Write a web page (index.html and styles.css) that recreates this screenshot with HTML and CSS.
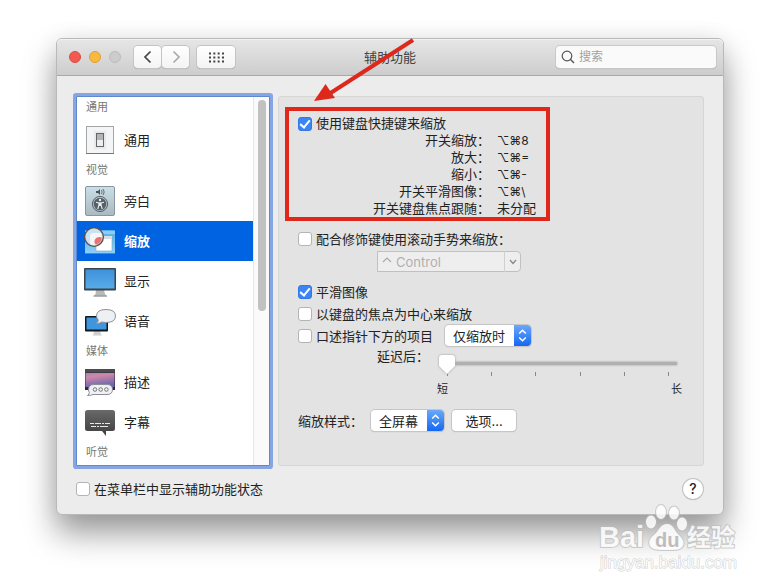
FILE: index.html
```html
<!DOCTYPE html>
<html lang="zh-CN">
<head>
<meta charset="utf-8">
<meta name="viewport" content="width=device-width, initial-scale=1">
<title>辅助功能</title>
<link rel="stylesheet" href="styles.css">
</head>
<body>
<main class="window">
  <header class="titlebar">
    <div class="titlebar-left">
      <div class="lights">
        <button class="light light-close" aria-label="关闭"></button>
        <button class="light light-min" aria-label="最小化"></button>
        <button class="light light-off" aria-label="缩放窗口" disabled></button>
      </div>
      <div class="history">
        <button class="tool" aria-label="后退"><svg width="10" height="14" viewBox="0 0 10 14"><path d="M7.500 1.500 2 7l5.500 5.500" fill="none" stroke="#444" stroke-width="1.700"/></svg></button>
        <button class="tool" aria-label="前进"><svg width="10" height="14" viewBox="0 0 10 14"><path d="M2.500 1.500 8 7l-5.500 5.500" fill="none" stroke="#aaa" stroke-width="1.700"/></svg></button>
      </div>
      <button class="tool tool-grid" aria-label="显示全部"><svg width="15" height="11" viewBox="0 0 15 11"><path d="M0 1.500h15M0 5.500h15M0 9.500h15" fill="none" stroke="#444" stroke-width="2" stroke-dasharray="2 2.330"/></svg></button>
    </div>
    <h1 class="title">辅助功能</h1>
    <label class="search">
      <svg width="14" height="14" viewBox="0 0 14 14"><circle cx="6" cy="6" r="4.800" fill="none" stroke="#555" stroke-width="1.200"/><path d="m9.500 9.500 3.500 3.500" stroke="#555" stroke-width="1.400"/></svg>
      <input type="search" placeholder="搜索" aria-label="搜索">
    </label>
  </header>

  <div class="content">
    <nav class="sidebar" aria-label="辅助功能类别">
      <div class="list">
        <h2 class="group group-first">通用</h2>
        <button class="item">
          <svg class="icon" viewBox="0 0 32 32"><rect x="2.500" y="2.500" width="27" height="27" fill="#f4f5f6" stroke="#a5a5a5"/><path d="M2 29.500h28" stroke="#777"/><rect x="10" y="7" width="12" height="18" rx="1" fill="#e9e9e9"/><rect x="12.500" y="9.500" width="7" height="13" fill="#eee" stroke="#666"/><path d="M13 10h6v6h-6z" fill="#b5b5b5"/></svg>
          通用
        </button>
        <h2 class="group">视觉</h2>
        <button class="item">
          <svg class="icon" viewBox="0 0 32 32"><defs><linearGradient id="vo" x2="0" y2="1"><stop stop-color="#cbdfe8"/><stop offset="1" stop-color="#a9b9bf"/></linearGradient></defs><rect x="1.500" y="1.500" width="29" height="29" rx="1.500" fill="url(#vo)" stroke="#88979e"/><path d="M12 6h2l2-2v6l-2-2h-2z" fill="#4a555a"/><path d="M17.500 5q1.300 2 0 4M19.200 4q2 3 0 6" fill="none" stroke="#4a555a" stroke-width=".8"/><circle cx="16" cy="19" r="7.600" fill="none" stroke="#566066"/><circle cx="16" cy="19" r="6.300" fill="#566066"/><circle cx="16" cy="15" r="1.200" fill="#e6eef2"/><path d="M12 17.300 15 18v2l-1.300 4M20 17.300 17 18v2l1.300 4" fill="none" stroke="#e6eef2" stroke-width="1.100"/><path d="M14.800 17.500h2.400v3.500h-2.400z" fill="#e6eef2"/></svg>
          旁白
        </button>
        <button class="item item-selected" aria-current="page">
          <svg class="icon" viewBox="0 0 32 32"><defs><linearGradient id="zw" x2="0" y2="1"><stop stop-color="#51aee9"/><stop offset="1" stop-color="#8ed1f7"/></linearGradient></defs><rect x="1" y="5" width="30" height="24" rx="1" fill="url(#zw)"/><path d="M1 6h30v3H1z" fill="#8dccf3"/><path d="M1 28.500h30" stroke="#3d91cf"/><rect x="12" y="11" width="16" height="15" rx="1" fill="#fff" stroke="#78a8c8" stroke-width=".6"/><path d="M12 11h16v3H12z" fill="#d9dde2"/><circle cx="10" cy="12" r="9" fill="#c9e2f4"/><path d="M6 11q0-3 3-3h8l2 4q0 9-9 9-4-1-4-4z" fill="#f6f6f6"/><path d="M10.500 17.500a5 5 0 0 1 8-4.500q0 5-5.500 7.500-2-1-2.500-3z" fill="#e77373"/><circle cx="10" cy="12" r="9.300" fill="none" stroke="#5c4f4c" stroke-width="1.500"/><circle cx="10" cy="12" r="8.200" fill="none" stroke="#d6e3ec" stroke-width=".6"/></svg>
          缩放
        </button>
        <button class="item">
          <svg class="icon" viewBox="0 0 32 32"><defs><linearGradient id="scr" x2="0" y2="1"><stop stop-color="#3f92da"/><stop offset="1" stop-color="#58aae8"/></linearGradient></defs><path d="M12 25h8l1 4 2 2.500H9.500L11.500 29z" fill="#b8b8b8"/><path d="M9.500 31h13.500" stroke="#8f8f8f"/><rect x="0" y="3" width="32" height="22.500" rx="1" fill="#38434c"/><rect x="1.500" y="4.500" width="29" height="19" fill="url(#scr)"/></svg>
          显示
        </button>
        <button class="item">
          <svg class="icon" viewBox="0 0 32 32"><path d="M10 26h6l1 3 1 1.500H8.500L9.500 29z" fill="#d0d0d0"/><rect x="1" y="11" width="23" height="15.500" rx="1" fill="#111820"/><rect x="2.500" y="12.500" width="20" height="12" fill="#3f96dd"/><path d="M12 18.500q2.500-1.500 2.300-3.500Q12.500 13 12.500 11q0-6.500 9.500-6.500t9.500 6.500-9.500 6.500q-2 0-4-.6-2.500 1.600-6 1.600z" fill="#eef0f3" stroke="#8f9397"/></svg>
          语音
        </button>
        <h2 class="group">媒体</h2>
        <button class="item">
          <svg class="icon" viewBox="0 0 32 32"><defs><linearGradient id="ph" x2="0.300" y2="1"><stop stop-color="#a684b8"/><stop offset=".3" stop-color="#cf87a8"/><stop offset="1" stop-color="#6d67b0"/></linearGradient></defs><rect x="1" y="3" width="30" height="21" fill="#2c2a33"/><path d="M1.500 7h29v14h-29z" fill="url(#ph)"/><path d="M1 3h30v3.500H1z" fill="#4c4c50"/><path d="M3.500 29.500q2-1.500 1.800-3Q4.500 25 4.500 24q0-5.500 5.500-5.500h13q5.500 0 5.500 5t-5.500 5H9q-2 1-5.500 1z" fill="#f0f1f5" stroke="#8b8d94"/><g fill="none" stroke="#777" stroke-width="1"><circle cx="11" cy="23.500" r="1.800"/><circle cx="16.700" cy="23.500" r="1.800"/><circle cx="22.400" cy="23.500" r="1.800"/></g></svg>
          描述
        </button>
        <button class="item">
          <svg class="icon" viewBox="0 0 32 32"><defs><linearGradient id="cap" x2="0" y2="1"><stop stop-color="#696969"/><stop offset="1" stop-color="#3e3e3e"/></linearGradient></defs><path d="M3.500 4h25Q31 4 31 6.500v16q0 2.500-2.500 2.500H22v5l-4-5H3.500Q1 25 1 22.500v-16Q1 4 3.500 4z" fill="url(#cap)"/><path d="M6 17.500h4m1 0h6m1 0h2m1 0h5M7 20.500h5m1 0h2m1 0h8" stroke="#e8e8e8" stroke-width="1"/></svg>
          字幕
        </button>
        <h2 class="group">听觉</h2>
      </div>
      <div class="scrollbar"><div class="thumb"></div></div>
    </nav>

    <section class="panel" aria-label="缩放">
      <div class="shortcuts">
        <label class="check"><input type="checkbox" checked>使用键盘快捷键来缩放</label>
        <dl class="keys">
          <dt>开关缩放：</dt><dd><kbd>⌥⌘8</kbd></dd>
          <dt>放大：</dt><dd><kbd>⌥⌘=</kbd></dd>
          <dt>缩小：</dt><dd><kbd>⌥⌘-</kbd></dd>
          <dt>开关平滑图像：</dt><dd><kbd>⌥⌘\</kbd></dd>
          <dt>开关键盘焦点跟随：</dt><dd>未分配</dd>
        </dl>
      </div>

      <div class="options">
        <label class="check"><input type="checkbox">配合修饰键使用滚动手势来缩放：</label>
        <div class="combo">
          <svg class="combo-ctrl" width="10" height="6" viewBox="0 0 10 6"><path d="M1 5l4-4 4 4" fill="none" stroke="#aaa" stroke-width="1.200"/></svg>
          <select disabled aria-label="修饰键"><option>Control</option></select>
          <span class="combo-arrow"><svg width="8" height="6" viewBox="0 0 8 6"><path d="m1 1 3 3.500L7 1" fill="none" stroke="#888" stroke-width="1.300"/></svg></span>
        </div>

        <div class="stack">
          <label class="check"><input type="checkbox" checked>平滑图像</label>
          <label class="check"><input type="checkbox">以键盘的焦点为中心来缩放</label>
          <div class="line">
            <label class="check"><input type="checkbox">口述指针下方的项目</label>
            <div class="popup popup-speak">
              <select aria-label="口述时机"><option>仅缩放时</option></select>
              <span class="popup-arrow"><svg width="9" height="13" viewBox="0 0 9 13"><path d="m1.200 4.500 3.300-3.300 3.300 3.300M1.200 8.500l3.300 3.300 3.300-3.300" fill="none" stroke="#fff" stroke-width="1.500"/></svg></span>
            </div>
          </div>
        </div>

        <div class="delay">
          <label class="delay-label" for="delay">延迟后：</label>
          <div class="delay-control">
            <input class="slider" id="delay" type="range" min="0" max="5" value="0">
            <div class="ticks"><i></i><i></i><i></i><i></i><i></i><i></i></div>
            <div class="ends"><span>短</span><span>长</span></div>
          </div>
        </div>

        <div class="line style-line">
          <label for="zoom-style">缩放样式：</label>
          <div class="popup popup-style">
            <select id="zoom-style"><option>全屏幕</option></select>
            <span class="popup-arrow"><svg width="9" height="13" viewBox="0 0 9 13"><path d="m1.200 4.500 3.300-3.300 3.300 3.300M1.200 8.500l3.300 3.300 3.300-3.300" fill="none" stroke="#fff" stroke-width="1.500"/></svg></span>
          </div>
          <button class="push">选项...</button>
        </div>
      </div>
    </section>
  </div>

  <footer class="footer">
    <label class="check"><input type="checkbox">在菜单栏中显示辅助功能状态</label>
    <button class="help" aria-label="帮助">?</button>
  </footer>

  <svg class="arrow" width="102" height="66" viewBox="0 0 102 66" aria-hidden="true"><path d="M99 2 15 56" stroke="#de281b" stroke-width="4"/><path d="M0 63 11.500 46 21 60z" fill="#de281b"/></svg>
</main>

<svg class="watermark" width="144" height="72" viewBox="0 0 144 72">
  <g class="mark">
    <text x="2" y="45" class="mark-name">Bai</text>
    <ellipse cx="54" cy="20" rx="5" ry="6.500"/>
    <ellipse cx="64" cy="10" rx="5" ry="7"/>
    <ellipse cx="77" cy="11" rx="5" ry="6.500"/>
    <ellipse cx="85" cy="22" rx="5" ry="6.500"/>
    <path d="M70 22c-6 0-8 6-12 10-5 4-7 7-5 12 2 4 8 4 17 4s14 0 16-4c2-5-1-8-5-12-4-4-5-10-11-10z"/>
    <text x="90" y="44" class="mark-cn">经验</text>
    <text x="3" y="66" class="mark-url">jingyan.baidu.com</text>
  </g>
  <text x="58" y="45" class="mark-du">du</text>
</svg>
</body>
</html>
```
FILE: styles.css
```css
* {
  box-sizing: border-box;
}

body {
  margin: 0;
  padding: 38px 56px 0;
  position: relative;
  min-height: 100vh;
  background: #fff;
  color: #222;
  font: 13px/18px Inter, "Noto Sans CJK SC", sans-serif;
}

button,
input,
select {
  font: inherit;
  color: inherit;
  margin: 0;
}

button {
  padding: 0;
  border: 0;
  background: none;
}

h1,
h2,
dl,
dd {
  margin: 0;
  font: inherit;
}

svg {
  display: block;
  flex: none;
}

.window {
  position: relative;
  border: 1px solid #b9b9b9;
  border-radius: 6px;
  background: #ececec;
  box-shadow: 0 18px 32px rgba(0, 0, 0, 0.4), 0 0 24px rgba(0, 0, 0, 0.06);
}

/* Title bar */
.titlebar {
  display: grid;
  grid-template-columns: 1fr auto 1fr;
  align-items: center;
  height: 37px;
  padding: 0 7px;
  border-bottom: 1px solid #a9a9a9;
  border-radius: 5px 5px 0 0;
  background: linear-gradient(#e6e6e6, #cdcdcd);
  box-shadow: inset 0 1px #f3f3f3;
}

.titlebar-left {
  display: flex;
  align-items: center;
  padding-left: 5px;
}

.lights {
  display: flex;
  gap: 8px;
  margin-right: 13px;
}

.light {
  width: 12px;
  height: 12px;
  border: 1px solid #bbb;
  border-radius: 50%;
  background: #ccc;
}

.light-close {
  border-color: #dd4a40;
  background: #f05a50;
}

.light-min {
  border-color: #dfa036;
  background: #f8b940;
}

.history {
  display: flex;
  gap: 1px;
  margin-right: 8px;
}

.tool {
  display: grid;
  place-items: center;
  width: 27px;
  height: 22px;
  border-radius: 4px;
  background: linear-gradient(#fff, #f4f4f4);
  box-shadow: 0 0 0 1px #c4c4c4, 0 1px 1px #999;
}

.tool-grid {
  width: 38px;
}

.title {
  color: #444;
}

.search {
  display: flex;
  align-items: center;
  justify-self: end;
  gap: 4px;
  width: 160px;
  height: 22px;
  padding: 0 5px;
  border-radius: 4px;
  background: #fafafa;
  box-shadow: 0 0 0 1px #c8c8c8, 0 1px 1px #999;
}

.search input {
  width: 100%;
  min-width: 0;
  padding: 0;
  border: 0;
  outline: 0;
  background: none;
  font-size: 12px;
}

.search input::placeholder {
  color: #a2a2a2;
}

/* Body */
.content {
  display: grid;
  grid-template-columns: 194px 1fr;
  gap: 8px;
  padding: 20px 19px 0;
}

.sidebar {
  display: flex;
  border: 1px solid #5e88cf;
  background: #fff;
  box-shadow: 0 0 0 3px #86a6e3;
  border-radius: 1px;
}

.list {
  flex: 1;
}

.scrollbar {
  width: 16px;
  padding: 3px 3px 0;
  border-left: 1px solid #e6e6e6;
  background: #fafafa;
}

.thumb {
  width: 8px;
  height: 211px;
  margin: 0 auto;
  border-radius: 4px;
  background: #c1c1c1;
}

.group {
  padding-left: 9px;
  color: #777;
  font-size: 11px;
  line-height: 21px;
}

.group-first {
  padding-bottom: 2px;
}

.item {
  display: flex;
  align-items: center;
  gap: 8px;
  width: 100%;
  height: 40px;
  padding-left: 7px;
  line-height: 16px;
  text-align: left;
}

.item-selected {
  background: #0063e1;
  color: #fff;
  font-weight: 700;
}

.icon {
  width: 32px;
  height: 32px;
}

.panel {
  padding: 10px 19px 33px 6px;
  border: 1px solid #d6d6d6;
  border-radius: 3px;
  background: #e3e3e3;
}

.check {
  display: flex;
  align-items: center;
  gap: 4px;
}

.check input {
  display: grid;
  place-items: center;
  appearance: none;
  width: 14px;
  height: 14px;
  border: 1px solid #b4b4b4;
  border-radius: 3px;
  background: #fff;
}

.check input:checked {
  border-color: #3478e5;
  background: #3b84f3;
}

.check input:checked::after {
  content: "";
  width: 4px;
  height: 8px;
  margin-bottom: 2px;
  border: solid #fff;
  border-width: 0 2px 2px 0;
  transform: rotate(40deg);
}

.shortcuts {
  width: 265px;
  padding: 4px 9px 0;
  border: 4px solid #e1261a;
  line-height: 17px;
}

.keys {
  display: grid;
  grid-template-columns: 192px 1fr;
  column-gap: 7px;
}

.keys dt {
  text-align: right;
}

.keys kbd {
  display: block;
  font-family: inherit;
  font-size: 12px;
}

.options {
  display: flex;
  flex-direction: column;
  padding: 9px 0 0 13px;
}

.combo,
.popup {
  position: relative;
  display: flex;
}

.combo {
  width: 144px;
  margin: 3px 0 11px 79px;
}

.combo select,
.popup select {
  appearance: none;
  width: 100%;
  height: 21px;
  padding: 0 0 0 8px;
  border: 0;
  border-radius: 4px;
  background: #fff;
  line-height: 18px;
  box-shadow: 0 0 0 1px #c6c6c6, 0 1px 1px #aaa;
}

.combo select {
  padding-left: 18px;
  border: 1px solid #c0c0c0;
  border-radius: 0 4px 4px 0;
  background: #eee;
  color: #b0b0b0;
  box-shadow: none;
  opacity: 1;
}

.combo-ctrl {
  position: absolute;
  left: 5px;
  top: 6px;
}

.combo-arrow,
.popup-arrow {
  position: absolute;
  top: 0;
  right: 0;
  bottom: 0;
  display: grid;
  place-items: center;
  width: 17px;
  pointer-events: none;
}

.combo-arrow {
  border-left: 1px solid #d0d0d0;
}

.popup-arrow {
  border-radius: 0 4px 4px 0;
  background: linear-gradient(#6aa9f8, #1567f3);
}

.popup-speak {
  width: 86px;
}

.popup-style {
  width: 73px;
}

.stack {
  display: flex;
  flex-direction: column;
  gap: 4px;
}

.line {
  display: flex;
  align-items: center;
  gap: 8px;
}

.stack .line {
  gap: 12px;
  margin-top: -2px;
}

.delay {
  display: grid;
  grid-template-columns: 131px 1fr;
  gap: 10px;
  margin: 1px 7px 0 0;
}

.delay-label {
  text-align: right;
}

.slider {
  display: block;
  appearance: none;
  width: 100%;
  height: 19px;
  margin-top: 8px;
  background: linear-gradient(#b0b0b0, #b0b0b0) 0 7px / 100% 3px no-repeat;
  filter: drop-shadow(0 0 1px #999);
}

.slider::-webkit-slider-thumb {
  appearance: none;
  width: 16px;
  height: 19px;
  border-radius: 3px;
  background: #fff;
  clip-path: polygon(0 0, 100% 0, 100% 58%, 50% 100%, 0 58%);
}

.ticks {
  display: flex;
  justify-content: space-between;
  height: 4px;
  margin-top: -2px;
  padding: 0 8px;
}

.ticks i {
  width: 1px;
  background: #888;
}

.ends {
  display: flex;
  justify-content: space-between;
  margin: 4px -5px 0 -2px;
  font-size: 11px;
}

.style-line {
  margin-top: 12px;
}

.push {
  width: 64px;
  height: 21px;
  border-radius: 4px;
  background: #fff;
  box-shadow: 0 0 0 1px #c6c6c6, 0 1px 1px #aaa;
}

.footer {
  display: flex;
  align-items: center;
  justify-content: space-between;
  height: 48px;
  padding: 0 20px 2px 19px;
}

.help {
  width: 20px;
  height: 20px;
  border-radius: 50%;
  background: #fff;
  font-size: 14px;
  font-weight: 500;
  box-shadow: 0 0 0 1px #c2c2c2, 0 1px 1px #aaa;
}

.panel {
  padding-bottom: 34px;
}

/* Annotation and watermark over the window */
.arrow {
  position: absolute;
  left: 257px;
  top: -1px;
  pointer-events: none;
}

.watermark {
  position: absolute;
  left: 597px;
  top: 502px;
  overflow: visible;
  pointer-events: none;
}

.mark {
  fill: #fff;
  fill-opacity: 0.85;
  stroke: #bbb;
  stroke-opacity: 0.7;
  stroke-width: 2px;
  paint-order: stroke;
}

.mark-name {
  font: 700 29px "Liberation Sans", sans-serif;
}

.mark-cn {
  font: 700 24px "Noto Sans CJK SC", sans-serif;
}

.mark-url {
  font: 17px "Liberation Sans", sans-serif;
  stroke-width: 1px;
}

.mark-du {
  font: 700 20px "Liberation Sans", sans-serif;
  fill: #bdbdbd;
}
```
